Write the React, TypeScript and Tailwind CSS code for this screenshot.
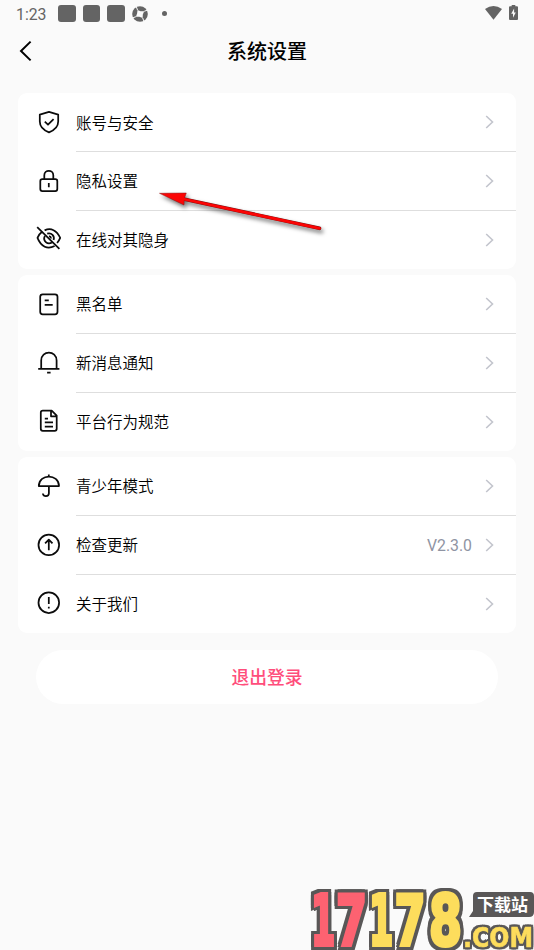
import type { ReactNode } from 'react';

interface SettingItem {
  label: string;
  icon: ReactNode;
  value?: string;
}

const groups: SettingItem[][] = [
  [
    {
      label: '账号与安全',
      icon: (
        <>
          <path d="M13 2.9 L22.2 5.6 V12.6 C22.2 18 18.2 21.4 13 23.4 C7.8 21.4 3.8 18 3.8 12.6 V5.6 Z" />
          <path d="M8.8 12.6 L12 15.7 L17.6 10.1" />
        </>
      ),
    },
    {
      label: '隐私设置',
      icon: (
        <>
          <rect x="4.3" y="11.2" width="17" height="11.8" rx="2" />
          <path d="M8.3 11.1 V7.2 C8.3 1.5 17.3 1.5 17.3 7.2 V11.1 M12.8 15 V19.2" />
        </>
      ),
    },
    {
      label: '在线对其隐身',
      icon: (
        <>
          <path d="M8.6 4.4 C15 1.4 20.8 4.3 24.2 11.9 C23.4 13.8 22.4 15.5 21.1 17 M6.3 5.5 C4.2 7.1 2.5 9.3 1.5 11.9 C5 20.8 11.6 23.7 18.6 20" />
          <path d="M11.2 7.7 C15.6 6.5 18.9 10 17.6 14.1 M8.9 9.8 C6.4 14.8 11.5 19.2 16 16.4 M13 10.2 C14.3 10.5 15 11.3 15.1 12.5" />
          <path d="M1.2 1.2 L23.4 22.8" />
        </>
      ),
    },
  ],
  [
    {
      label: '黑名单',
      icon: (
        <>
          <rect x="4.2" y="3.3" width="17.3" height="20" rx="2.5" />
          <path d="M8.7 9.4 H12.8 M8.7 13.8 H16.7" />
        </>
      ),
    },
    {
      label: '新消息通知',
      icon: (
        <path d="M2.2 18.8 H23.4 M5.2 18.8 V10.6 C5.2 0 20.6 0 20.6 10.6 V18.8 M11.1 22.6 H14.6" />
      ),
    },
    {
      label: '平台行为规范',
      icon: (
        <>
          <path d="M15.7 2.6 H6.8 Q4.8 2.6 4.8 4.6 V20.8 Q4.8 22.8 6.8 22.8 H18.7 Q20.7 22.8 20.7 20.8 V7.6 Z M15 2.8 V8.3 H20.5" />
          <path d="M8.8 10.5 H12 M8.8 14.4 H17 M8.8 18.5 H17" />
        </>
      ),
    },
  ],
  [
    {
      label: '青少年模式',
      icon: (
        <path d="M12.8 1.4 V3.5 M2.8 13 C3.2 0.4 22.6 0.4 23 13 Z M12.9 13 V20.2 C12.9 24 6.9 24 6.9 20.5" />
      ),
    },
    {
      label: '检查更新',
      value: 'V2.3.0',
      icon: (
        <>
          <circle cx="12.8" cy="12.9" r="10.3" />
          <path d="M12.8 18.2 V7.9 M9.1 11.4 L12.8 7.7 L16.5 11.4" />
        </>
      ),
    },
    {
      label: '关于我们',
      icon: (
        <>
          <circle cx="12.8" cy="12.7" r="10.3" />
          <path d="M12.8 7 V14 M12.8 16.8 V18.4" />
        </>
      ),
    },
  ],
];

const StatusBar = () => (
  <div className="flex h-7 items-center pl-4 pr-[15px] text-[#646464]">
    <span className="w-[42.3px] pt-px font-[Roboto] text-[15.8px] leading-7">1:23</span>
    <div className="flex items-center gap-[7px]">
      <div className="-mt-px h-[17px] w-[17.5px] rounded-[3px] bg-[#646464]" />
      <div className="-mt-px h-[17px] w-[17.5px] rounded-[3px] bg-[#646464]" />
      <div className="-mt-px h-[17px] w-[17.5px] rounded-[3px] bg-[#646464]" />
      <svg className="-mt-px h-4 w-4" viewBox="0 0 16 16">
        <circle cx="8" cy="8" r="7.8" fill="#646464" />
        <path d="M5.5 4 L8.6 5.2 L12.2 5.3 L10.8 8.6 L10.7 12 L7.3 10.8 L3.9 10.7 L5.1 7.5 Z" fill="#fafafa" />
        <path d="M5.5 4 L4.2 0.4 M12.2 5.3 L15.6 4 M10.7 12 L12 15.6 M3.9 10.7 L0.4 12" stroke="#fafafa" strokeWidth="1" />
      </svg>
    </div>
    <div className="-mt-px ml-[14px] h-[5px] w-[5px] rounded-full bg-[#646464]" />
    <svg className="-mt-[2px] ml-auto h-[14px] w-[17px]" viewBox="0 0 17 14">
      <path d="M0 2.9 Q8.5 -2.7 17 2.9 L8.5 13.8 Z" fill="#646464" />
    </svg>
    <svg className="-mt-[3px] ml-[7px] mr-px h-[15px] w-[9px]" viewBox="0 0 9 15">
      <path d="M1 1.3 H2.7 V0 H6.3 V1.3 H8 Q9 1.3 9 2.3 V14 Q9 15 8 15 H1 Q0 15 0 14 V2.3 Q0 1.3 1 1.3 Z" fill="#646464" />
      <path d="M5.1 3.5 L2.2 8.7 H4 V12.7 L6.8 7.5 H5.1 Z" fill="#fafafa" />
    </svg>
  </div>
);

const Header = () => (
  <div className="grid h-[46px] grid-cols-[48px_1fr_48px] items-center">
    <svg className="-mt-px ml-[18px] h-6 w-4" viewBox="0 0 16 24" fill="none" stroke="#000" strokeWidth="2">
      <path d="M12.6 2.6 L3 12 L12.6 21.4" />
    </svg>
    <h1 className="text-center text-[20px] font-medium leading-none text-black">系统设置</h1>
  </div>
);

const SettingRow = ({ item, last }: { item: SettingItem; last: boolean }) => (
  <div className={`flex items-center pl-[18px] ${last ? 'h-[58px]' : 'h-[58.8px]'}`}>
    <svg
      className="-mt-px h-[26px] w-[26px] shrink-0"
      viewBox="0 0 26 26"
      fill="none"
      stroke="#0c0c0c"
      strokeWidth="1.75"
      strokeLinejoin="round"
    >
      {item.icon}
    </svg>
    <div
      className={`ml-[14px] flex h-full flex-1 items-center pr-[21px] ${last ? '' : 'border-b border-[#dedede]'}`}
    >
      <span className="text-[15.5px] font-[350] text-black">{item.label}</span>
      {item.value && (
        <span className="ml-auto mr-[13px] pt-[2px] font-[Roboto] text-[15.8px] text-[#8f94a3]">{item.value}</span>
      )}
      <svg
        className={`h-4 w-[10px] ${item.value ? '' : 'ml-auto'}`}
        viewBox="0 0 10 16"
        fill="none"
        stroke="#c3c5cd"
        strokeWidth="1.6"
      >
        <path d="M1.2 2 L7.5 8 L1.2 14" />
      </svg>
    </div>
  </div>
);

const SiteMark = () => (
  <div className="pointer-events-none absolute bottom-0 right-0 h-[66px] w-[230px]">
    <svg
      className="h-full w-full"
      viewBox="304 884 230 66"
      fontFamily="'DejaVu Sans', sans-serif"
      fontWeight="700"
    >
      <g className="drop-shadow-[3px_0_0_#595757]">
        <g className="drop-shadow-[-3px_0_0_#595757]">
          <g className="drop-shadow-[0_3px_0_#595757]">
            <g className="drop-shadow-[0_-3px_0_#595757]">
              <text y="945.5" fontSize="70" strokeWidth="4" transform="scale(0.5 1)" strokeLinejoin="miter">
                <tspan x="622" fill="#fd6271" stroke="#fd6271">1</tspan>
                <tspan x="672" fill="#fd6271" stroke="#fd6271" textLength="62" lengthAdjust="spacingAndGlyphs">7</tspan>
                <tspan x="738" fill="#fddd5c" stroke="#fddd5c">1</tspan>
                <tspan x="789" fill="#fddd5c" stroke="#fddd5c" textLength="62" lengthAdjust="spacingAndGlyphs">7</tspan>
                <tspan x="858" fill="#fddd5c" stroke="#fddd5c" textLength="66" lengthAdjust="spacingAndGlyphs">8</tspan>
              </text>
            </g>
          </g>
        </g>
      </g>
      <g className="drop-shadow-[2px_0_0_#595757]">
        <g className="drop-shadow-[-2px_0_0_#595757]">
          <g className="drop-shadow-[0_2px_0_#595757]">
            <g className="drop-shadow-[0_-2px_0_#595757]">
              <text
                x="463"
                y="946.5"
                fontSize="26"
                fill="#fddd5c"
                stroke="#fddd5c"
                strokeWidth="0.6"
                textLength="70"
                lengthAdjust="spacingAndGlyphs"
              >
                .COM
              </text>
            </g>
          </g>
        </g>
      </g>
      <path d="M477 892 H530 Q534 892 534 896 V912 Q534 917 529 917 H469 L473 911 V896 Q473 892 477 892 Z" fill="#595757" />
      <text x="477" y="911" fontSize="17" fill="#fff" fontFamily="'Noto Sans CJK SC', sans-serif">
        下载站
      </text>
    </svg>
  </div>
);

const PointerArrow = () => (
  <svg
    className="pointer-events-none absolute left-[150px] top-[180px] h-[65px] w-[190px] drop-shadow-[2px_3px_2px_rgba(0,0,0,0.55)]"
    viewBox="0 0 190 65"
  >
    <path d="M31 18.5 L169.5 48.3" stroke="#7d1010" strokeWidth="3.6" strokeLinecap="round" />
    <path d="M9.5 13.3 L36.3 13 L34.3 18.5 L34 25 Z" fill="#fb0505" stroke="#8c1010" strokeWidth="0.5" />
    <path d="M31 18.5 L169.5 48.3" stroke="#fb0505" strokeWidth="2.8" strokeLinecap="round" />
  </svg>
);

export default function App() {
  return (
    <div className="relative h-[950px] w-[534px] overflow-hidden bg-[#fafafa] font-['Noto_Sans_CJK_SC',sans-serif]">
      <StatusBar />
      <Header />
      <div className="ml-[18px] mt-[19.4px] flex w-[498px] flex-col gap-[6.2px]">
        {groups.map((group) => (
          <div key={group[0].label} className="overflow-hidden rounded-[9px] bg-white">
            {group.map((item, i) => (
              <SettingRow key={item.label} item={item} last={i === group.length - 1} />
            ))}
          </div>
        ))}
      </div>
      <button className="ml-[36px] mt-[17.4px] flex h-[53.6px] w-[462px] items-center justify-center rounded-full bg-white text-[17.8px] font-medium text-[#ff4d7b]">
        退出登录
      </button>
      <PointerArrow />
      <SiteMark />
    </div>
  );
}
